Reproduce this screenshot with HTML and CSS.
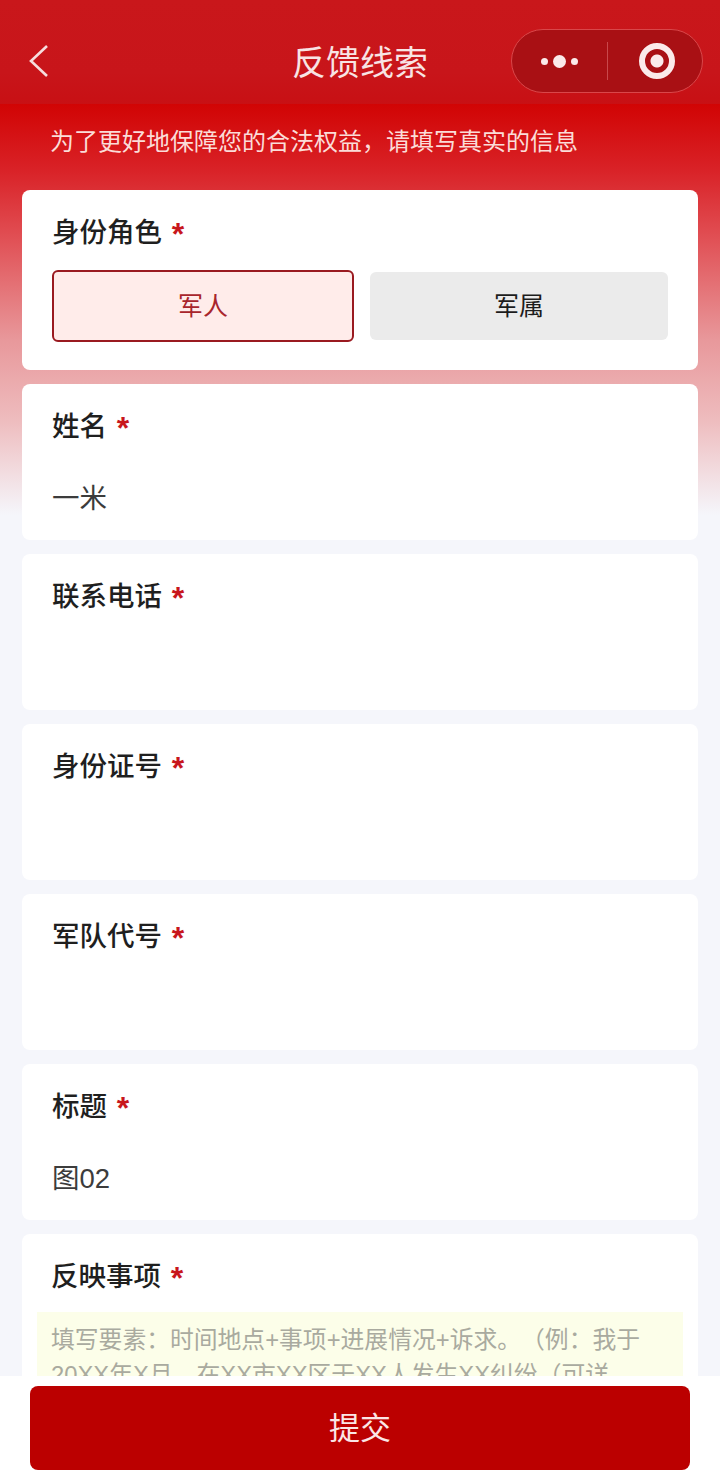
FILE: index.html
```html
<!DOCTYPE html>
<html lang="zh-CN">
<head>
    <meta charset="UTF-8">
    <meta name="viewport" content="width=device-width, initial-scale=1.0">
    <title>反馈线索</title>
    <link rel="stylesheet" href="styles.css">
</head>
<body>
    <div class="page">
        <header class="navbar">
            <svg class="back" width="20" height="34" viewBox="0 0 20 34">
                <path d="M18 2 L2 17 L18 32" fill="none" stroke="#f6dede" stroke-width="2.6"/>
            </svg>
            <h1>反馈线索</h1>
            <div class="capsule">
                <div class="capsule-more">
                    <span class="dot"></span>
                    <span class="dot dot-big"></span>
                    <span class="dot"></span>
                </div>
                <div class="capsule-line"></div>
                <div class="capsule-close"><span class="ring"></span></div>
            </div>
        </header>

        <p class="notice">为了更好地保障您的合法权益，请填写真实的信息</p>

        <form class="form">
            <div class="card card-role">
                <div class="label">身份角色 <span class="star">*</span></div>
                <div class="options">
                    <div class="option selected">军人</div>
                    <div class="option">军属</div>
                </div>
            </div>
            <div class="card">
                <div class="label">姓名 <span class="star">*</span></div>
                <div class="value">一米</div>
            </div>
            <div class="card">
                <div class="label">联系电话 <span class="star">*</span></div>
                <div class="value"></div>
            </div>
            <div class="card">
                <div class="label">身份证号 <span class="star">*</span></div>
                <div class="value"></div>
            </div>
            <div class="card">
                <div class="label">军队代号 <span class="star">*</span></div>
                <div class="value"></div>
            </div>
            <div class="card">
                <div class="label">标题 <span class="star">*</span></div>
                <div class="value">图02</div>
            </div>
            <div class="card card-text">
                <div class="label">反映事项 <span class="star">*</span></div>
                <div class="textarea">填写要素：时间地点+事项+进展情况+诉求。（例：我于<br>20XX年X月，在XX市XX区于XX人发生XX纠纷（可详</div>
            </div>
        </form>

        <div class="footer">
            <button type="button" class="submit">提交</button>
        </div>
    </div>
</body>
</html>
```

FILE: styles.css
```css
html, body {
    margin: 0;
    padding: 0;
}

body {
    font-family: "Liberation Sans", "Noto Sans CJK SC", sans-serif;
    background-color: #f5f6fb;
}

.page {
    position: relative;
    height: 1470px;
    overflow: hidden;
    background: linear-gradient(180deg, #d10404 104px, #d92227 170px, #e04a4f 230px, #e8989b 340px, #eebcbe 420px, #f5f6fb 515px);
}

.navbar {
    position: relative;
    height: 104px;
    display: flex;
    align-items: center;
    justify-content: center;
    background: linear-gradient(180deg, #c9171b, #c8151a 70%, #c81014);
}

.navbar h1 {
    margin: 0;
    padding-top: 17px;
    color: #f8e4e4;
    font-size: 34px;
    font-weight: 400;
}

.back {
    position: absolute;
    left: 29px;
    top: 44px;
}

.capsule {
    position: absolute;
    left: 511px;
    top: 29px;
    width: 192px;
    height: 64px;
    box-sizing: border-box;
    display: flex;
    align-items: center;
    border: 1px solid #d9474a;
    border-radius: 32px;
    background-color: #a91014;
}

.capsule-more {
    width: 95px;
    display: flex;
    align-items: center;
    justify-content: center;
    gap: 5px;
}

.dot {
    width: 7px;
    height: 7px;
    border-radius: 50%;
    background-color: #fbeaea;
}

.dot-big {
    width: 13px;
    height: 13px;
}

.capsule-line {
    width: 1px;
    height: 38px;
    background-color: #c9484b;
}

.capsule-close {
    flex: 1;
    display: flex;
    justify-content: center;
    padding-left: 4px;
}

.ring {
    width: 36px;
    height: 36px;
    box-sizing: border-box;
    border: 6px solid #fbeaea;
    border-radius: 50%;
    background: radial-gradient(circle, #fbeaea 0 6px, transparent 7px);
}

.notice {
    margin: 0;
    height: 86px;
    padding: 22px 0 0 50px;
    box-sizing: border-box;
    color: #fbdcd8;
    font-size: 24px;
    line-height: 32px;
}

.form {
    display: flex;
    flex-direction: column;
    gap: 14px;
    padding: 0 22px;
}

.card {
    height: 156px;
    box-sizing: border-box;
    padding: 23px 30px 0;
    background: #ffffff;
    border-radius: 8px;
}

.card-role {
    height: 180px;
}

.label {
    height: 40px;
    color: #1f1f1f;
    font-size: 27.5px;
    font-weight: 500;
    line-height: 40px;
}

.star {
    margin-left: 2px;
    color: #c8161c;
    font-size: 32px;
    font-weight: 700;
    vertical-align: -3px;
}

.value {
    margin-top: 32px;
    height: 40px;
    color: #3c3c3c;
    font-size: 27.5px;
    line-height: 40px;
}

.options {
    display: flex;
    align-items: center;
    gap: 16px;
    margin-top: 17px;
}

.option {
    width: 298px;
    height: 68px;
    border-radius: 6px;
    background-color: #ebebeb;
    color: #1c1c1c;
    font-size: 25px;
    line-height: 68px;
    text-align: center;
}

.option.selected {
    width: 302px;
    height: 72px;
    box-sizing: border-box;
    border: 2px solid #9a1a20;
    background-color: #ffecea;
    color: #a8252c;
}

.card-text {
    height: 300px;
    padding: 0 15px;
}

.card-text .label {
    padding-top: 23px;
    padding-left: 14px;
}

.textarea {
    margin-top: 15px;
    padding: 10px 14px;
    height: 220px;
    box-sizing: border-box;
    background-color: #fcfee9;
    color: #a9aa9f;
    font-size: 23.8px;
    line-height: 35px;
    text-spacing-trim: space-all;
}

.footer {
    position: absolute;
    left: 0;
    right: 0;
    bottom: 0;
    height: 94px;
    padding: 10px 30px 0;
    box-sizing: border-box;
    background: #ffffff;
}

.submit {
    display: block;
    width: 100%;
    height: 84px;
    padding: 0 0 5px;
    border: none;
    border-radius: 8px;
    background-color: #bb0000;
    color: #fbe6e6;
    font-family: inherit;
    font-size: 31px;
}
```
